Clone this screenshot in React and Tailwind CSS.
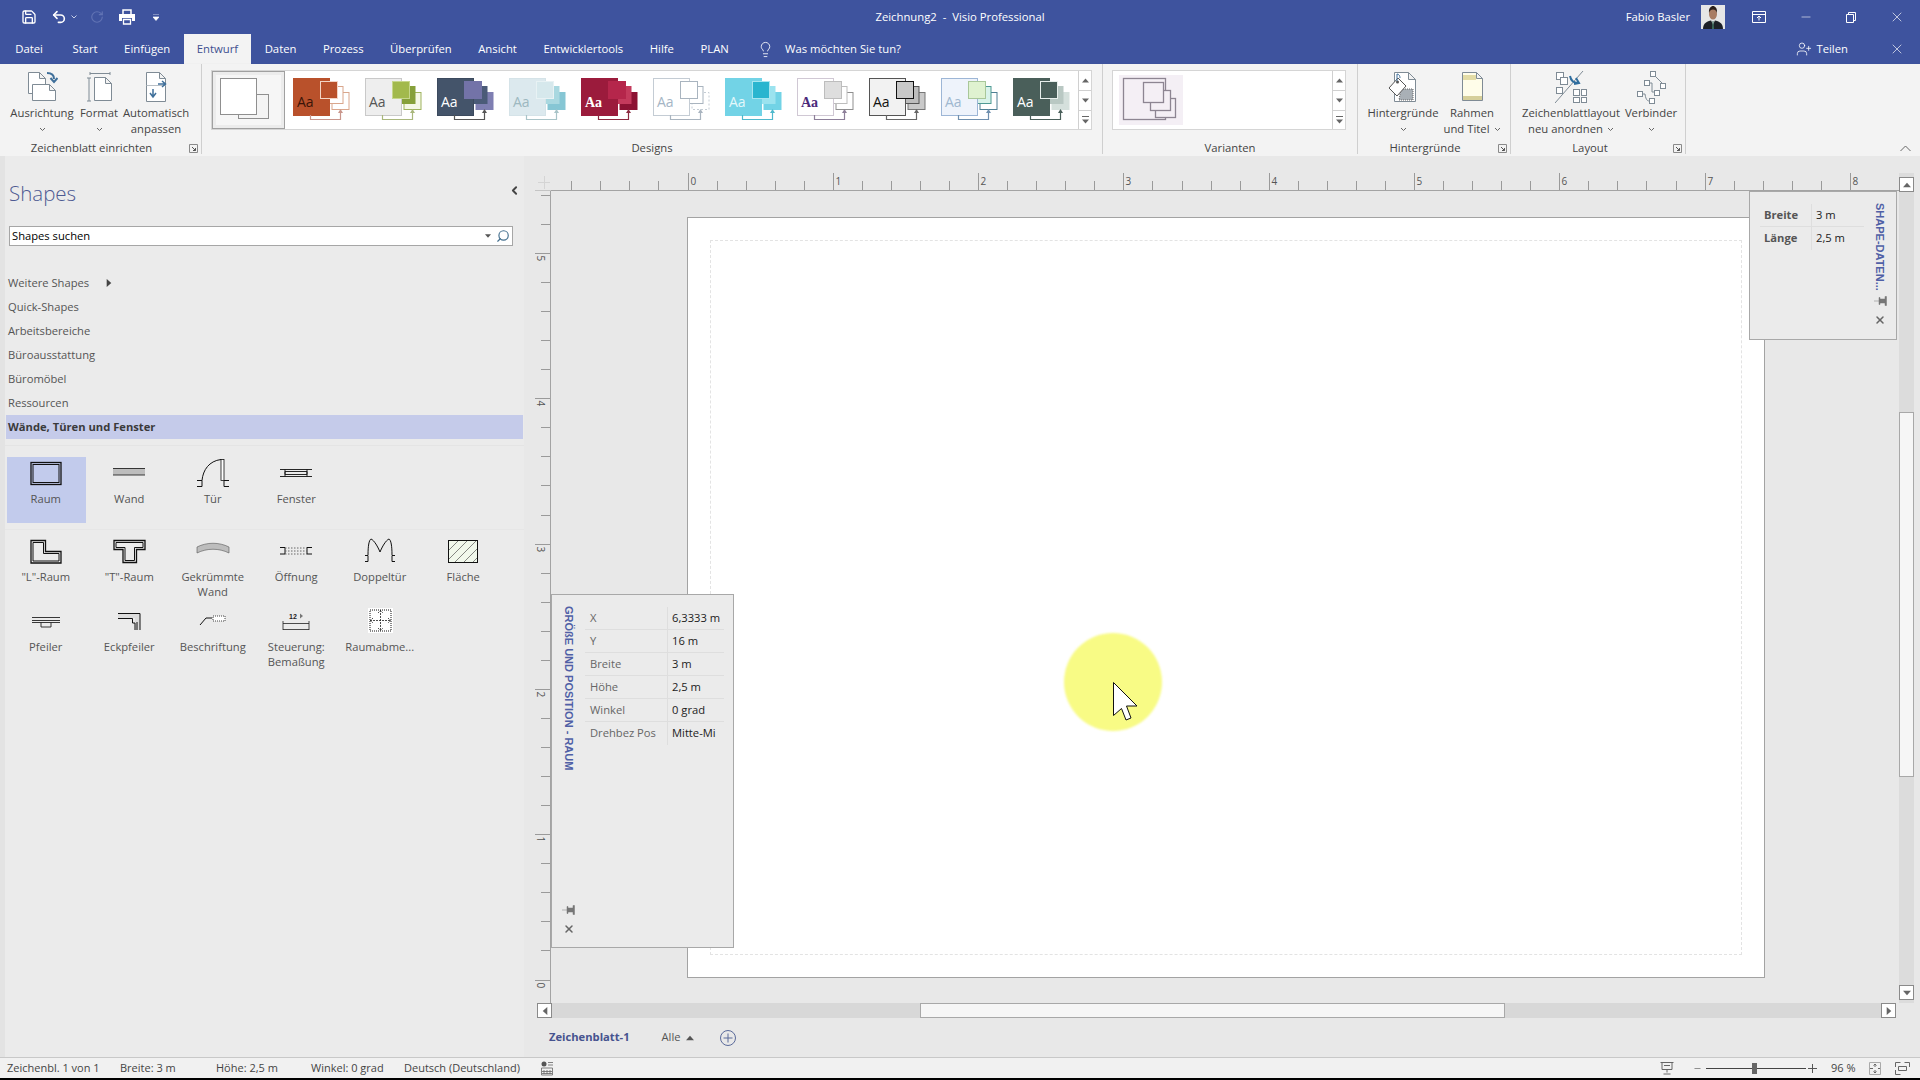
import React from "react";
import { Save, Undo2, RotateCw, Lightbulb, UserPlus, ChevronLeft, Search, Minus, X } from "lucide-react";

const tabs = ["Datei", "Start", "Einfügen", "Entwurf", "Daten", "Prozess", "Überprüfen", "Ansicht", "Entwicklertools", "Hilfe", "PLAN"];
const stencils = ["Quick-Shapes", "Arbeitsbereiche", "Büroausstattung", "Büromöbel", "Ressourcen"];

const themes = [
  { main: "#b9512b", mainLine: "#b9512b", a: "#b9512b", aLine: "#f3d5c5", b: "#fff", bLine: "#d9a68c", c: "#fff", cLine: "#d9a68c", aa: "#3b1408", line: "#c9968c" },
  { main: "#eeeeee", mainLine: "#c9c9c9", a: "#a2b94c", aLine: "#c6d68c", b: "#86a03a", bLine: "#86a03a", c: "#f4f7e6", cLine: "#9fb35e", aa: "#555", line: "#a9b77c" },
  { main: "#44546a", mainLine: "#3c4a5e", a: "#7373a8", aLine: "#7373a8", b: "#4b5b78", bLine: "#4b5b78", c: "#7f7fb2", cLine: "#7f7fb2", aa: "#fff", line: "#555" },
  { main: "#dce9ee", mainLine: "#d5e3e8", a: "#d6e8ec", aLine: "#e8f2f4", b: "#a9d8e0", bLine: "#a9d8e0", c: "#86c6d4", cLine: "#86c6d4", aa: "#9db8c0", line: "#a9c4c8" },
  { main: "#9b1b3c", mainLine: "#9b1b3c", a: "#b5264b", aLine: "#b5264b", b: "#c43a5c", bLine: "#c43a5c", c: "#8c1233", cLine: "#8c1233", aa: "#fff", line: "#8c2a40", serif: true },
  { main: "#fff", mainLine: "#c4ccd4", a: "#fff", aLine: "#a9b4bf", b: "#fff", bLine: "#a9b4bf", c: "#fff", cLine: "#c4ccd4", aa: "#a5b5c5", line: "#a9b4bf", dash: true },
  { main: "#72d3e6", mainLine: "#72d3e6", a: "#29b5cf", aLine: "#a7e6f0", b: "#9be3ef", bLine: "#9be3ef", c: "#72d3e6", cLine: "#72d3e6", aa: "#e4f8fb", line: "#4fb8cc" },
  { main: "#fff", mainLine: "#d0c8d4", a: "#dedede", aLine: "#bdbdbd", b: "#fff", bLine: "#bdbdbd", c: "#fff", cLine: "#8f8f8f", aa: "#4b2a7a", line: "#8d7f99", serif: true },
  { main: "#f2f2f2", mainLine: "#555", a: "#c8c8c8", aLine: "#111", b: "#bdbdbd", bLine: "#555", c: "#c9c9c9", cLine: "#777", aa: "#111", line: "#666" },
  { main: "#eef3fb", mainLine: "#9db6d6", a: "#dff2d0", aLine: "#a9c79a", b: "#d9f3ea", bLine: "#4f9a94", c: "#fff", cLine: "#4f7f94", aa: "#a0b8d0", line: "#6f8fae" },
  { main: "#4a5f5a", mainLine: "#4a5f5a", a: "#4a5f5a", aLine: "#e8efec", b: "#b9c8c3", bLine: "#b9c8c3", c: "#d5e0dc", cLine: "#d5e0dc", aa: "#fff", line: "#4a5f5a" },
];

const sizeRows = [
  ["X", "6,3333 m"],
  ["Y", "16 m"],
  ["Breite", "3 m"],
  ["Höhe", "2,5 m"],
  ["Winkel", "0 grad"],
  ["Drehbez Pos", "Mitte-Mi"],
];

const ThemeThumb = ({ t }) => (
  <div className="h-[56px] w-[72px] shrink-0">
    <svg width="72" height="56">
      <rect x="47" y="21.5" width="17" height="17" fill={t.c} stroke={t.cLine} strokeDasharray={t.dash ? "2 2" : undefined} />
      <rect x="41" y="15.5" width="17" height="17" fill={t.b} stroke={t.bLine} />
      <rect x="8.5" y="7.5" width="36" height="37" fill={t.main} stroke={t.mainLine} />
      <rect x="35.5" y="10.5" width="17" height="17" fill={t.a} stroke={t.aLine} />
      <text x="12" y="36" fontSize="14" fontWeight={t.serif ? 700 : 400} fontFamily={t.serif ? "Liberation Serif, serif" : "Open Sans, sans-serif"} fill={t.aa}>Aa</text>
      <path d="M25.5 44v4.5h30V41" fill="none" stroke={t.line} strokeWidth="1.2" />
      <path d="M53 42l2.5-4 2.5 4z" fill={t.line} />
    </svg>
  </div>
);

const Caret = ({ className = "" }) => (
  <svg width="7" height="5" viewBox="0 0 7 5" className={className}>
    <path d="M1 1l2.5 2.5L6 1" fill="none" stroke="#666" />
  </svg>
);

const Launcher = () => (
  <svg width="9" height="9" viewBox="0 0 9 9" className="absolute bottom-[1px] right-[3px]">
    <path d="M.5.5h8v8M.5.5v8h8" fill="none" stroke="#8a8a8a" />
    <path d="M3 3l3.5 3.5M6.5 4v2.5H4" fill="none" stroke="#555" />
  </svg>
);

const AusrichtungIcon = () => (
  <svg width="32" height="32" viewBox="0 0 32 32">
    <path d="M2.5 1.500h11l6 6v15h-17z M13.500 1.500v6h6" fill="#fff" stroke="#7f8b95" />
    <path d="M6.500 13.500h17l6 6v10h-23z M23.500 13.500v6h6" fill="#fff" stroke="#7f8b95" />
    <path d="M21 2c5 0 7 2 7 6M24.500 7l3.500 4 3.500-4" fill="none" stroke="#3f6f9a" strokeWidth="2" />
  </svg>
);

const FormatIcon = () => (
  <svg width="32" height="32" viewBox="-3 0 32 32">
    <path d="M4 2.500h20M4 1v3M24 1v3" stroke="#7f8b95" fill="none" />
    <path d="M3 7v23M1 7h4M1 30h4" stroke="#7f8b95" fill="none" />
    <path d="M8.500 6.500h11l6 6v17h-17z M19.500 6.500v6h6" fill="#fff" stroke="#7f8b95" />
  </svg>
);

const AnpassenIcon = () => (
  <svg width="32" height="32" viewBox="0 0 32 32">
    <path d="M6.500 1.500h13l6 6v23h-19z M19.500 1.500v6h6" fill="#fff" stroke="#7f8b95" />
    <path d="M6.500 14.500h19" stroke="#b9c0c6" />
    <path d="M15 8h7M19 5l3.500 3-3.500 3" transform="translate(3 5)" fill="none" stroke="#3f6f9a" strokeWidth="1.500" />
    <path d="M13 18v7M10 22l3 4 3-4" fill="none" stroke="#3f6f9a" strokeWidth="1.500" />
  </svg>
);

const HintergrundIcon = () => (
  <svg width="32" height="32" viewBox="0 0 32 32">
    <path d="M7.500 1.500h14l7 7v22h-21z M21.500 1.500v7h7" fill="#fff" stroke="#7f8b95" />
    <path d="M14 18h12v11H12z" fill="#a9b0b6" strokeDasharray="1 1" stroke="#666" />
    <path d="M2 17l9-10 8 8-9 10z" fill="#fff" stroke="#555" />
    <circle cx="10.500" cy="11" r="1.500" fill="#555" />
    <path d="M10 10V3c2 0 3 2 3 4" fill="none" stroke="#3f6f9a" />
  </svg>
);

const RahmenIcon = () => (
  <svg width="32" height="32" viewBox="0 0 32 32">
    <path d="M6.500 1.500h14l6 6v22h-20z M20.500 1.500v6h6" fill="#fffde9" stroke="#7f8b95" />
    <rect x="7" y="4" width="13" height="5" fill="#e3dca6" />
    <rect x="7" y="25" width="19" height="4" fill="#d6cf9a" />
  </svg>
);

const LayoutIcon = () => (
  <svg width="32" height="34" viewBox="0 0 32 34">
    <g fill="#fff" stroke="#7f8b95">
      <rect x="1.500" y="2.500" width="7" height="7" />
      <rect x="5.500" y="7.500" width="7" height="7" />
      <rect x="1.500" y="17.500" width="6" height="6" />
      <rect x="18.500" y="19.500" width="6" height="6" />
      <rect x="26.500" y="19.500" width="5" height="6" />
      <rect x="18.500" y="27.500" width="6" height="5" />
      <rect x="26.500" y="27.500" width="5" height="5" />
    </g>
    <path d="M0 33L28 1" stroke="#7f8b95" />
    <path d="M15 6c1 5 4 7 8 7M19 14l5-1-3-5" fill="none" stroke="#2f6d9e" strokeWidth="2" />
  </svg>
);

const VerbinderIcon = () => (
  <svg width="30" height="34" viewBox="0 0 30 34">
    <g fill="#fff" stroke="#7f8b95">
      <rect x="14.500" y="1.500" width="5" height="5" />
      <rect x="24.500" y="13.500" width="5" height="5" />
      <rect x="8.500" y="10.500" width="5" height="5" />
      <rect x="1.500" y="21.500" width="5" height="5" />
      <rect x="18.500" y="20.500" width="5" height="5" />
      <rect x="13.500" y="28.500" width="5" height="5" />
    </g>
    <path d="M19 6l7 7M13 13h3v9h3M6 24h3c1 7 3 7 5 7" fill="none" stroke="#7f8b95" />
  </svg>
);

const RibbonButton = ({ icon, lines, caret, width }) => (
  <div className={`flex shrink-0 flex-col items-center ${width}`}>
    <div className="flex h-[32px] items-center">{icon}</div>
    <div className="mt-[2px] text-center leading-[16px] whitespace-nowrap">
      <div>{lines[0]}</div>
      <div className="flex h-[16px] items-center justify-center gap-[4px]">
        {lines[1] && <span>{lines[1]}</span>}
        {caret && <Caret />}
      </div>
    </div>
  </div>
);

const GroupLabel = ({ children, className = "" }) => (
  <div className={`absolute inset-x-0 -bottom-[1px] text-center leading-[14px] ${className}`}>{children}</div>
);

const Tri = ({ dir, color = "#666", size = 7 }) => {
  const shapes = { up: "M0 5L3.500 1 7 5z", down: "M0 1h7L3.500 5z", left: "M5 0v7L1 3.500z", right: "M1 0v7l4-3.500z" };
  return (
    <svg width={size} height={size} viewBox={dir === "left" || dir === "right" ? "0 0 6 7" : "0 0 7 6"}>
      <path d={shapes[dir]} fill={color} />
    </svg>
  );
};

const ScrollArrows = () => (
  <div className="flex w-[13px] shrink-0 flex-col border-l border-[#d0d0d0]">
    <div className="flex h-[20px] items-center justify-center border-b border-[#d0d0d0]"><Tri dir="up" /></div>
    <div className="flex h-[20px] items-center justify-center border-b border-[#d0d0d0]"><Tri dir="down" /></div>
    <div className="flex flex-1 flex-col items-center justify-center gap-[1px]">
      <div className="h-px w-[7px] bg-[#666]" />
      <Tri dir="down" />
    </div>
  </div>
);

const Ribbon = () => (
  <div className="flex h-[92px] shrink-0 bg-[#f3f3f3] text-[11.3px] text-[#444] shadow-[0_1px_2px_rgba(0,0,0,0.18)]">
    <div className="relative flex h-[90px] w-[202px] shrink-0 gap-[4px] border-r border-[#cfcfcf] pl-[8px] pt-[7px]">
      <RibbonButton icon={<AusrichtungIcon />} lines={["Ausrichtung"]} caret width="w-[68px]" />
      <RibbonButton icon={<FormatIcon />} lines={["Format"]} caret width="w-[38px]" />
      <RibbonButton icon={<AnpassenIcon />} lines={["Automatisch", "anpassen"]} width="w-[68px]" />
      <GroupLabel className="pr-[18px]">Zeichenblatt einrichten</GroupLabel>
      <Launcher />
    </div>
    <div className="relative h-[90px] w-[901px] shrink-0 border-r border-[#cfcfcf] pl-[9px] pt-[6px]">
      <div className="flex h-[60px] w-[881px] border border-[#d5d5d5] bg-white">
        <div className="h-[58px] w-[73px] shrink-0 border border-[#a0a0a0] bg-[#ececec] p-[3px]">
          <svg width="65" height="50" viewBox="0 0 65 50" className="bg-[#f6f6f6]">
            <rect x="22.500" y="19.500" width="30" height="24" fill="#f4f4f4" stroke="#8f8f8f" />
            <rect x="4.500" y="3.500" width="36" height="36" fill="#fff" stroke="#8f8f8f" />
          </svg>
        </div>
        <div className="flex flex-1">
          {themes.map((t, i) => (
            <ThemeThumb key={i} t={t} />
          ))}
        </div>
        <ScrollArrows />
      </div>
      <GroupLabel>Designs</GroupLabel>
    </div>
    <div className="relative h-[90px] w-[255px] shrink-0 border-r border-[#cfcfcf] pl-[9px] pt-[6px]">
      <div className="flex h-[60px] w-[234px] border border-[#d5d5d5] bg-white">
        <div className="flex-1 pl-[6px] pt-[4px]">
          <svg width="64" height="50" viewBox="0 0 64 50" className="bg-[#f4eff5]">
            <g fill="#f4eff5" stroke="#8d8592" strokeWidth="1.300">
              <rect x="4.500" y="3.500" width="42" height="41" />
              <rect x="36.500" y="23.500" width="20" height="19" />
              <rect x="31.500" y="15.500" width="20" height="20" />
              <rect x="24.500" y="7.500" width="20" height="20" />
            </g>
          </svg>
        </div>
        <ScrollArrows />
      </div>
      <GroupLabel>Varianten</GroupLabel>
    </div>
    <div className="relative flex h-[90px] w-[153px] shrink-0 gap-[4px] border-r border-[#cfcfcf] pl-[9px] pt-[7px]">
      <RibbonButton icon={<HintergrundIcon />} lines={["Hintergründe"]} caret width="w-[72px]" />
      <RibbonButton icon={<RahmenIcon />} lines={["Rahmen", "und Titel"]} caret width="w-[58px]" />
      <GroupLabel className="pr-[18px]">Hintergründe</GroupLabel>
      <Launcher />
    </div>
    <div className="relative flex h-[90px] w-[175px] shrink-0 gap-[5px] border-r border-[#cfcfcf] pl-[10px] pt-[7px]">
      <RibbonButton icon={<LayoutIcon />} lines={["Zeichenblattlayout", "neu anordnen"]} caret width="w-[100px]" />
      <RibbonButton icon={<VerbinderIcon />} lines={["Verbinder"]} caret width="w-[50px]" />
      <GroupLabel className="pr-[16px]">Layout</GroupLabel>
      <Launcher />
    </div>
    <div className="flex flex-1 items-end justify-end pb-[4px] pr-[9px]">
      <svg width="11" height="7" viewBox="0 0 11 7">
        <path d="M.5 6L5.500 1l5 5" fill="none" stroke="#666" />
      </svg>
    </div>
  </div>
);

const Avatar = () => (
  <svg width="24" height="24" viewBox="0 0 24 24" className="bg-[#e6e6e6]">
    <path d="M2 24c0-6 4-8 10-9 6 1 10 3 10 9z" fill="#1d2027" />
    <path d="M10 15l2 5 2-5z" fill="#e8e8e8" />
    <path d="M11.500 16h1l.5 8h-2z" fill="#3c6a5c" />
    <ellipse cx="12" cy="9" rx="4" ry="5.500" fill="#a87c63" />
    <path d="M8 8c-.5-5 2-7 4-7s4.500 2 4 7c-1-3-2-3.500-4-3.500S9 5 8 8z" fill="#2a1f1a" />
  </svg>
);

const TitleBar = () => (
  <div className="relative flex h-[34px] shrink-0 items-center bg-[#3e539e] text-[11.3px] text-white">
    <div className="flex items-center pl-[21px]">
      <Save size={16} strokeWidth={2} />
      <Undo2 size={16} strokeWidth={2.4} className="ml-[14px]" />
      <svg width="6" height="4" viewBox="0 0 6 4" className="ml-[4px]"><path d="M.5.5L3 3 5.500.5" fill="none" stroke="#c7cfe8" /></svg>
      <RotateCw size={14} strokeWidth={2} className="ml-[13px] text-[#6173b4]" />
      <svg width="16" height="16" viewBox="0 0 16 16" className="ml-[15px]">
        <path d="M4 5V1h8v4" fill="none" stroke="#fff" strokeWidth="1.500" />
        <path d="M0 5h16v7h-3V9H3v3H0z" fill="#fff" />
        <path d="M4.500 10.500h7v4.500h-7z" fill="none" stroke="#fff" strokeWidth="1.300" />
      </svg>
      <svg width="6" height="7" viewBox="0 0 6 7" className="ml-[18px]"><path d="M0 0h6M0 3h6L3 6.500z" fill="#fff" stroke="#fff" strokeWidth=".7" /></svg>
    </div>
    <div className="absolute left-1/2 -translate-x-1/2 whitespace-pre">Zeichnung2  -  Visio Professional</div>
    <div className="ml-auto flex items-center">
      <span>Fabio Basler</span>
      <span className="ml-[11px]"><Avatar /></span>
      <svg width="14" height="12" viewBox="0 0 14 12" className="ml-[27px]">
        <path d="M.5.5h13v11H.5zM.5 3.500h13M7 9.500V5M5 7l2-2 2 2" fill="none" stroke="#fff" />
      </svg>
      <Minus size={14} strokeWidth={1} className="ml-[33px]" />
      <svg width="10" height="11" viewBox="0 0 10 11" className="ml-[33px]">
        <path d="M.5 2.500h7v8h-7zM2.500 2.500V.5h7v8h-2" fill="none" stroke="#fff" />
      </svg>
      <X size={16} strokeWidth={1} className="ml-[33px] mr-[15px]" />
    </div>
  </div>
);

const TabRow = () => (
  <div className="flex h-[30px] shrink-0 items-stretch bg-[#3e539e] pl-[2px] text-[11.3px] text-white">
    {tabs.map((t) =>
      t === "Entwurf" ? (
        <div key={t} className="flex items-center bg-[#f3f3f3] px-[13.25px] text-[#3e4f90]">{t}</div>
      ) : t === "Datei" ? (
        <div key={t} className="mr-[3px] flex items-center px-[13.25px]">{t}</div>
      ) : (
        <div key={t} className="flex items-center px-[13.25px]">{t}</div>
      )
    )}
    <div className="ml-[15px] flex items-center gap-[11px]">
      <Lightbulb size={17} strokeWidth={1.2} />
      <span>Was möchten Sie tun?</span>
    </div>
    <div className="ml-auto flex items-center">
      <UserPlus size={16} strokeWidth={1.2} />
      <span className="ml-[4px]">Teilen</span>
      <X size={16} strokeWidth={1} className="ml-[41px] mr-[15px]" />
    </div>
  </div>
);

// shapes are drawn in a 36x30 frame around the centre of each stencil cell
const iconShapes = {
  Raum: (
    <>
      <rect x="3" y="2.500" width="30" height="22" fill="none" stroke="#111" strokeWidth="1.300" />
      <rect x="5" y="4.500" width="26" height="18" fill="none" stroke="#111" />
    </>
  ),
  Wand: (
    <>
      <rect x="2" y="8" width="32" height="7" fill="#bdbdbd" />
      <path d="M2 8.500h32M2 15h32" stroke="#111" strokeWidth=".8" />
    </>
  ),
  Tür: (
    <>
      <path d="M7 20.500C8 10 14 1 26 -.5" fill="none" stroke="#111" />
      <rect x="26" y="-.5" width="3" height="21" fill="#fff" stroke="#111" strokeWidth=".8" />
      <path d="M2 20.500h5v6H2M34 20.500h-5v6h5" fill="none" stroke="#111" />
    </>
  ),
  Fenster: (
    <path d="M2 9.500h32M2 16.500h32M7 9.500v7M29 9.500v7M7 11.500h22v3H7z" fill="none" stroke="#111" strokeWidth=".9" />
  ),
  LRaum: (
    <>
      <path d="M3 2.500h14.500v11H33v11.500H3z" fill="none" stroke="#111" strokeWidth="1.300" />
      <path d="M5 4.500h10.500v11H31v7.500H5z" fill="none" stroke="#111" />
    </>
  ),
  TRaum: (
    <>
      <path d="M3 2.500h31v9h-8.500v13H12v-13H3z" fill="none" stroke="#111" strokeWidth="1.300" />
      <path d="M5 4.500h27v5h-8.500v13H14v-13H5z" fill="none" stroke="#111" />
    </>
  ),
  Gekruemmt: (
    <path d="M2 9c10-5 22-5 32 0v6c-10-5-22-5-32 0z" fill="#bdbdbd" stroke="#555" strokeWidth=".6" />
  ),
  Oeffnung: (
    <>
      <path d="M2 9.500h5v6.500H2M34 9.500h-5v6.500h5" fill="none" stroke="#111" />
      <path d="M7 10h22M7 13h22M7 16h22" stroke="#666" strokeDasharray="1.500 1.500" />
    </>
  ),
  Doppeltuer: (
    <>
      <path d="M6 17C6 8 7 2 9 1c3 1 7 8 9 13 2-5 6-12 9-13 2 1 3 7 3 16" fill="none" stroke="#111" />
      <path d="M3 17.500h3v6H3M33 17.500h-3v6h3" fill="none" stroke="#111" />
    </>
  ),
  Flaeche: (
    <>
      <rect x="3.500" y="2.500" width="29" height="22" fill="#f1f8ec" stroke="#111" />
      <path d="M4 12L13 3M4 21L22 3M10 24L31 3M19 24l13-13M28 24l4-4" stroke="#555" strokeWidth=".7" />
    </>
  ),
  Pfeiler: (
    <path d="M4 9.500h28M4 12.500h28M4 14.500h28M13 14.500v4.500h10v-4.500" fill="none" stroke="#222" strokeWidth=".9" />
  ),
  Eckpfeiler: (
    <>
      <path d="M7 5h22v17h-5v-12H7z" fill="#ddd" />
      <path d="M7 5.500h22V22M7 10.500h14.500V15H24v7M26 14v8" fill="none" stroke="#111" />
    </>
  ),
  Beschriftung: (
    <>
      <path d="M5 17l6-7h6" fill="none" stroke="#111" />
      <rect x="18" y="8" width="12" height="5" fill="#fff" stroke="#444" strokeDasharray="1 1" />
    </>
  ),
  Steuerung: (
    <>
      <text x="11" y="11" fontSize="7" fontWeight="700" fontFamily="Liberation Sans, sans-serif" fill="#222">12</text>
      <path d="M22 5.500v5l3-2.500z" fill="#777" />
      <path d="M5 13v9M31 13v9M5 15.500h26M5 21.500h26" fill="none" stroke="#222" strokeWidth=".8" />
    </>
  ),
  Raumabme: (
    <>
      <rect x="6" y="0" width="25" height="25" fill="#fff" />
      <rect x="8" y="2" width="21" height="21" fill="none" stroke="#111" strokeDasharray="1 1" />
      <path d="M18.500 2v21M8 12.500h21M16 5l2.500-2.500L21 5M16 20l2.500 2.500L21 20M11 10l-2.500 2.500L11 15M26 10l2.500 2.500L26 15" fill="none" stroke="#222" strokeWidth=".8" strokeDasharray="2 1" />
    </>
  ),
};

const stencilRows = [
  [
    ["Raum", ["Raum"], true],
    ["Wand", ["Wand"]],
    ["Tür", ["Tür"]],
    ["Fenster", ["Fenster"]],
  ],
  [
    ["LRaum", ['"L"-Raum']],
    ["TRaum", ['"T"-Raum']],
    ["Gekruemmt", ["Gekrümmte", "Wand"]],
    ["Oeffnung", ["Öffnung"]],
    ["Doppeltuer", ["Doppeltür"]],
    ["Flaeche", ["Fläche"]],
  ],
  [
    ["Pfeiler", ["Pfeiler"]],
    ["Eckpfeiler", ["Eckpfeiler"]],
    ["Beschriftung", ["Beschriftung"]],
    ["Steuerung", ["Steuerung:", "Bemaßung"]],
    ["Raumabme", ["Raumabme..."]],
  ],
];

const StencilCell = ({ id, label }) => (
  <div className="flex w-[83.5px] shrink-0 flex-col items-center pt-[2px]">
    <div className="flex h-[32px] items-center">
      <svg width="36" height="30" viewBox="0 0 36 30" className="overflow-visible">{iconShapes[id]}</svg>
    </div>
    <div className="whitespace-nowrap text-center leading-[15px]">
      {label.map((l) => <div key={l}>{l}</div>)}
    </div>
  </div>
);

const Sidebar = () => (
  <aside className="flex w-[524px] shrink-0 flex-col border-l-[5px] border-[#e3e3e3] bg-[#ebebeb] text-[11.2px] text-[#555]">
    <div className="flex items-center justify-between pl-[4px] pr-[3px] pt-[22px]">
      <div className="text-[20.5px] font-light leading-[30px] text-[#4d5a92]">Shapes</div>
      <ChevronLeft size={13} strokeWidth={3.5} className="-mt-[6px] text-[#444]" />
    </div>
    <div className="ml-[4px] mt-[18px] flex h-[20px] w-[504px] items-center justify-between border border-[#a6a6a6] bg-white pl-[2px] pr-[2px] text-black">
      <span>Shapes suchen</span>
      <span className="flex items-center gap-[5px]">
        <Tri dir="down" color="#555" size={6} />
        <Search size={14} strokeWidth={2} className="-scale-x-100 text-[#45708f]" />
      </span>
    </div>
    <div className="mt-[25px]">
      <div className="flex h-[24px] items-center pl-[3px]">
        Weitere Shapes
        <span className="ml-[16px]"><Tri dir="right" color="#444" size={8} /></span>
      </div>
      {stencils.map((s) => (
        <div key={s} className="flex h-[24px] items-center pl-[3px]">{s}</div>
      ))}
      <div className="ml-[1px] flex h-[24px] w-[517px] items-center bg-[#c5cbea] pl-[2px] font-bold text-[#3a3a3a]">Wände, Türen und Fenster</div>
    </div>
    <div className="mt-[6px] w-[519px] border-t border-[#e4e4e4] pt-[11px]">
      <div className="flex">
        <div className="ml-[2px] h-[66px] w-[79px] bg-[#c2cbec]" />
        <div className="-ml-[82px] flex">
          {stencilRows[0].map(([id, label]) => (
            <StencilCell key={id} id={id} label={label} />
          ))}
        </div>
      </div>
      <div className="mt-[6px] border-t border-[#e6e6e6] pt-[5px]">
        <div className="-ml-[1px] flex h-[70px]">
          {stencilRows[1].map(([id, label]) => (
            <StencilCell key={id} id={id} label={label} />
          ))}
        </div>
        <div className="-ml-[1px] flex">
          {stencilRows[2].map(([id, label]) => (
            <StencilCell key={id} id={id} label={label} />
          ))}
        </div>
      </div>
    </div>
  </aside>
);

const unit = 145.3 / 5;
const topTicks = Array.from({ length: 46 }, (_, i) => i);
const leftTicks = Array.from({ length: 28 }, (_, i) => i - 0);

const TopRuler = () => (
  <svg width="1348" height="18" className="block">
    <line x1="0" x2="1348" y1="17.5" y2="17.5" stroke="#a3a3a3" />
    {topTicks.map((i) => {
      const x = Math.round(136.5 + (i - 5) * unit) + 0.5;
      const major = (i - 5) % 5 === 0;
      return (
        <g key={i}>
          <line x1={x} x2={x} y1={major ? 0 : 8} y2="17" stroke="#9a9a9a" />
          {major && i >= 5 && <text x={x + 2} y="12" fontSize="10" fontFamily="Open Sans, sans-serif" fill="#555">{(i - 5) / 5}</text>}
        </g>
      );
    })}
  </svg>
);

const LeftRuler = () => (
  <svg width="16" height="812" className="block">
    <line x1="15.5" x2="15.5" y1="0" y2="812" stroke="#a3a3a3" />
    {leftTicks.map((i) => {
      const y = Math.round(788.5 - i * unit) + 0.5;
      const major = i % 5 === 0;
      return (
        <g key={i}>
          <line x1={major ? 0 : 6} x2="15" y1={y} y2={y} stroke="#9a9a9a" />
          {major && <text transform={`translate(2 ${y + 2}) rotate(90)`} fontSize="10" fontFamily="Open Sans, sans-serif" fill="#555">{i / 5}</text>}
        </g>
      );
    })}
  </svg>
);

const ScrollButton = ({ dir, className = "" }) => (
  <div className={`flex h-[15px] w-[15px] shrink-0 items-center justify-center border border-[#8a8a8a] bg-white ${className}`}>
    <Tri dir={dir} color="#666" size={8} />
  </div>
);

const PinClose = () => (
  <div className="flex flex-col items-center gap-[7px] text-[#666]">
    <svg width="13" height="12" viewBox="0 0 13 12">
      <path d="M0 6h5M5 2.500h1v7H5zM6 4h5v4H6zM11 1.500h1.500v9H11z" fill="#777" stroke="#777" strokeWidth=".5" />
    </svg>
    <X size={12} strokeWidth={3} />
  </div>
);

const SizePanel = () => (
  <div className="absolute left-[27px] top-[438px] flex h-[354px] w-[183px] border border-[#a8a8a8] bg-[#ebebeb] text-[11.2px]">
    <div className="flex w-[33px] shrink-0 flex-col items-center justify-between pb-[12px] pt-[11px]">
      <div className="whitespace-nowrap font-['Liberation_Sans',sans-serif] text-[11px] font-bold text-[#5060a6] [writing-mode:vertical-rl]">GRÖßE UND POSITION - RAUM</div>
      <PinClose />
    </div>
    <div className="mt-[12px]">
      {sizeRows.map(([k, v], i) => (
        <div key={k} className={`flex h-[23px] w-[139px] items-center ${i < 5 ? "border-b border-[#dedede]" : ""}`}>
          <div className="flex h-full w-[83px] items-center border-r border-[#dedede] pl-[5px] text-[#666]">{k}</div>
          <div className="pl-[4px] text-[#222]">{v}</div>
        </div>
      ))}
    </div>
  </div>
);

const DataPanel = () => (
  <div className="absolute left-[1225px] top-[35px] flex h-[149px] w-[148px] border border-[#a8a8a8] bg-[#ebebeb] text-[11.2px]">
    <div className="ml-[10px] mt-[12px] w-[104px]">
      <div className="flex h-[23px] items-center border-b border-[#dedede]">
        <div className="flex h-full w-[52px] items-center border-r border-[#dedede] pl-[4px] font-bold text-[#555]">Breite</div>
        <div className="pl-[4px] text-[#222]">3 m</div>
      </div>
      <div className="flex h-[23px] items-center">
        <div className="flex h-full w-[52px] items-center border-r border-[#dedede] pl-[4px] font-bold text-[#555]">Länge</div>
        <div className="pl-[4px] text-[#222]">2,5 m</div>
      </div>
    </div>
    <div className="flex flex-1 flex-col items-center justify-between pb-[13px] pt-[11px]">
      <div className="whitespace-nowrap font-['Liberation_Sans',sans-serif] text-[11px] font-bold text-[#5060a6] [writing-mode:vertical-rl]">SHAPE-DATEN...</div>
      <PinClose />
    </div>
  </div>
);

const Workspace = () => (
  <main className="relative flex flex-1 flex-col overflow-hidden bg-[#e8e8e8] pl-[11px] pt-[17px] text-[11.2px]">
    <div className="flex h-[830px] shrink-0">
      <div className="flex w-[1364px] shrink-0 flex-col">
        <div className="flex h-[18px]">
          <svg width="16" height="18" className="shrink-0">
            <path d="M3 9.500h12M9.500 3v13" stroke="#d4d4d4" />
            <path d="M0 17.500h16" stroke="#c4c4c4" />
          </svg>
          <TopRuler />
        </div>
        <div className="flex flex-1">
          <LeftRuler />
          <div className="flex-1 pl-[136px] pt-[26px]">
            <div className="h-[761px] w-[1078px] border border-[#a3a3a3] bg-white p-[22px]">
              <div className="h-full w-full border border-dashed border-[#e3e3e3]" />
            </div>
          </div>
        </div>
      </div>
      <div className="flex w-[15px] shrink-0 flex-col bg-[#dcdcdc]">
        <ScrollButton dir="up" className="mt-[4px]" />
        <div className="mt-[220px] h-[365px] border border-[#a8a8a8] bg-[#f6f6f6]" />
        <ScrollButton dir="down" className="mt-auto mb-[3px]" />
      </div>
    </div>
    <div className="ml-[2px] flex h-[15px] w-[1359px] shrink-0 bg-[#d8d8d8]">
      <ScrollButton dir="left" />
      <div className="ml-[368px] h-full w-[585px] border border-[#a8a8a8] bg-[#f6f6f6]" />
      <ScrollButton dir="right" className="ml-auto" />
    </div>
    <div className="flex flex-1 items-center pl-[14px] text-[#555]">
      <span className="font-bold text-[#46538f]">Zeichenblatt-1</span>
      <span className="ml-[32px]">Alle</span>
      <span className="ml-[5px]"><Tri dir="up" color="#555" size={8} /></span>
      <svg width="16" height="16" viewBox="0 0 16 16" className="ml-[26px]">
        <circle cx="8" cy="8" r="7.500" fill="none" stroke="#5a6a9a" />
        <path d="M8 3.500v9M3.500 8h9" stroke="#5a6a9a" />
      </svg>
    </div>
    <SizePanel />
    <DataPanel />
    <div className="absolute left-[540px] top-[477px] h-[98px] w-[98px] rounded-full bg-[#f8fb85] blur-[1px]" />
    <svg width="26" height="40" viewBox="0 0 26 40" className="absolute left-[589px] top-[526px]">
      <path d="M.5.5v33l8-7 4.500 11.500 5-2-4.500-12h10.500z" fill="#fff" stroke="#111" />
    </svg>
  </main>
);

const StatusBar = () => (
  <div className="flex h-[21px] shrink-0 items-center border-t border-[#c8c8c8] bg-[#f1f1f1] pl-[7px] text-[11px] text-[#444]">
    <span className="w-[113px]">Zeichenbl. 1 von 1</span>
    <span className="w-[96px]">Breite: 3 m</span>
    <span className="w-[95px]">Höhe: 2,5 m</span>
    <span className="w-[93px]">Winkel: 0 grad</span>
    <span className="w-[136px]">Deutsch (Deutschland)</span>
    <svg width="14" height="15" viewBox="0 0 14 15">
      <circle cx="4" cy="3" r="2.500" fill="#555" />
      <path d="M8 1.500h5M8 4h5M1.500 7h11v7h-11zM4 9v4M7 9v4M10 9v4M2 10.500h10M2 12.500h10" fill="none" stroke="#666" strokeWidth=".8" />
    </svg>
    <div className="ml-auto flex items-center">
      <svg width="14" height="14" viewBox="0 0 14 14">
        <path d="M.5 1.500h13M2 1.500v7h10v-7M4 4.500h6M7 8.500v3M3.500 13h7" fill="none" stroke="#666" />
      </svg>
      <Minus size={9} strokeWidth={1.5} className="ml-[19px]" />
      <div className="relative ml-[4px] flex h-[11px] w-[100px] items-center">
        <div className="h-px w-full bg-[#444]" />
        <div className="absolute left-[46px] h-[11px] w-[5px] bg-[#666]" />
      </div>
      <svg width="9" height="9" viewBox="0 0 9 9" className="ml-[2px]"><path d="M0 4.500h9M4.500 0v9" stroke="#555" /></svg>
      <span className="ml-[14px] w-[38px]">96 %</span>
      <svg width="12" height="13" viewBox="0 0 12 13">
        <path d="M.5.5h11v12H.5z" fill="none" stroke="#aaa" />
        <path d="M6 2v3M4.500 3.500L6 2l1.500 1.500M6 11V8M4.500 9.500L6 11l1.500-1.500M1 6.500h3M9 6.500h2" fill="none" stroke="#666" />
      </svg>
      <svg width="15" height="13" viewBox="0 0 15 13" className="ml-[14px] mr-[10px]">
        <path d="M.5 5V.5h5M9.500.5h5V5M.5 8v4.500h5M3.500 4.500h8v4h-8z" fill="none" stroke="#666" />
      </svg>
    </div>
  </div>
);

const App = () => (
  <div className="flex h-[1080px] w-[1920px] flex-col overflow-hidden bg-black font-['Open_Sans',sans-serif]">
    <TitleBar />
    <TabRow />
    <Ribbon />
    <div className="relative flex h-[901px] shrink-0 overflow-hidden">
      <Sidebar />
      <Workspace />
    </div>
    <StatusBar />
    <div className="flex-1 bg-black" />
  </div>
);

export default App;
